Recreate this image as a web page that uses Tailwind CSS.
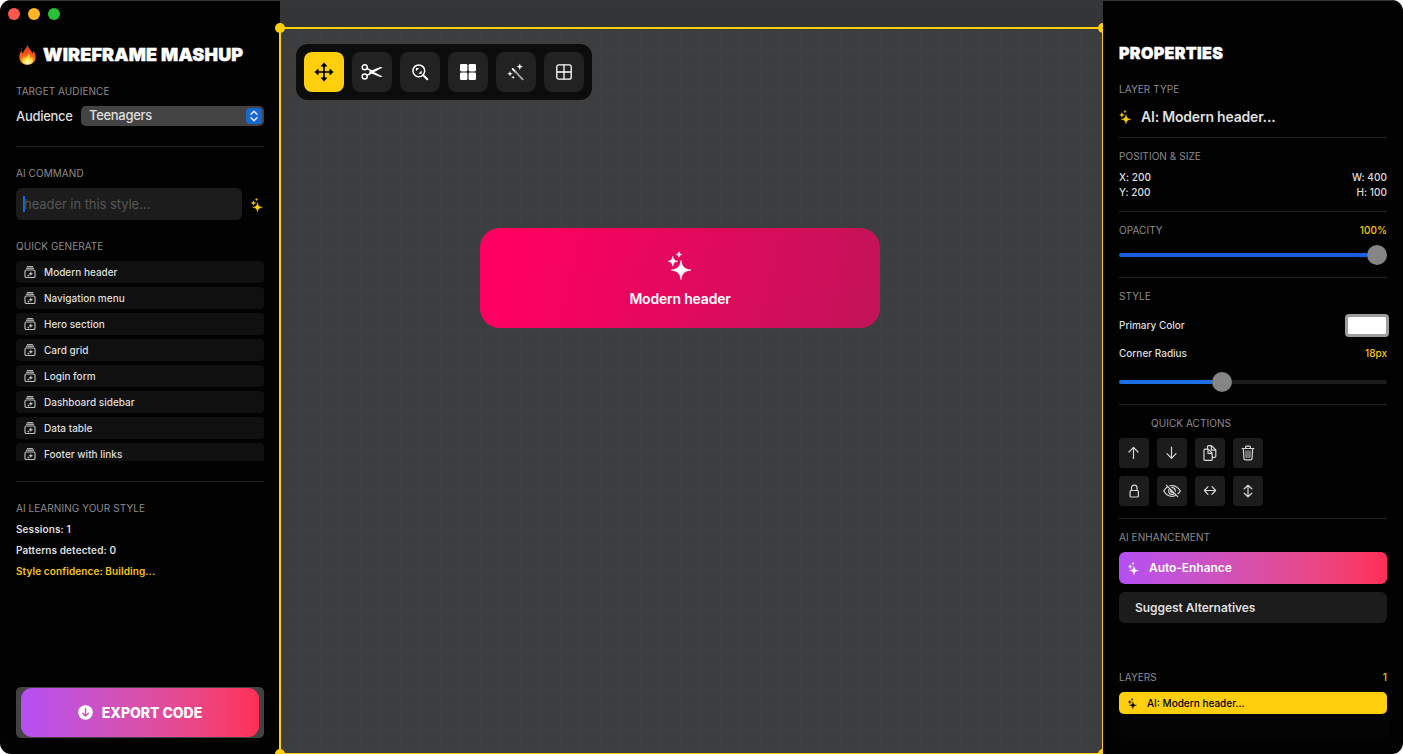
<!DOCTYPE html>
<html lang="en">
<head>
<meta charset="utf-8">
<title>Wireframe Mashup</title>
<script src="https://cdn.jsdelivr.net/npm/@tailwindcss/browser@4"></script>
</head>
<body class="bg-white font-['Inter',sans-serif]">
<svg class="hidden">
  <symbol id="sparkles" viewBox="0 0 24 28">
    <path fill="currentColor" stroke="currentColor" stroke-width=".7" stroke-linejoin="round" d="M13 9C13.900 15.200 16.200 17.700 23 18.600C16.200 19.500 13.900 22 13 28C12.100 22 9.800 19.500 3.200 18.600C9.800 17.700 12.100 15.200 13 9ZM4.800 5C5.400 8.200 6.400 9.200 9.600 9.800C6.400 10.400 5.400 11.400 4.800 14.600C4.200 11.400 3.200 10.400 .400 9.800C3.200 9.200 4.200 8.200 4.800 5ZM11 .300C11.400 2.100 11.900 2.600 13.700 3C11.900 3.400 11.400 3.900 11 5.700C10.600 3.900 10.100 3.400 8.300 3C10.100 2.600 10.600 2.100 11 .300Z"/>
  </symbol>
  <symbol id="stack" viewBox="0 0 12 12">
    <g fill="none" stroke="currentColor"><path stroke-width="1" d="M3 .6H9"/><path stroke-width="1.200" d="M2 2.200H10"/><rect x="1" y="4" width="10" height="7.500" rx="1.200" stroke-width="1.100"/></g>
    <path fill="currentColor" d="M6.800 5.300L7.500 7L9.200 7.700L7.500 8.400L6.800 10.100L6.100 8.400L4.400 7.700L6.100 7ZM4.300 8.200L4.700 9.200L5.700 9.600L4.700 10L4.300 11L3.900 10L2.900 9.600L3.900 9.200Z"/>
  </symbol>
</svg>
<div class="relative flex h-[754px] w-[1403px] overflow-hidden rounded-[11px] bg-[#020202] text-[#dfdfdf]">

  <aside class="flex w-[280px] shrink-0 flex-col px-4">
    <div class="-ml-2 mt-2 flex h-3 gap-2">
      <i class="size-3 rounded-full bg-[#ff5650]"></i><i class="size-3 rounded-full bg-[#ffb429]"></i><i class="size-3 rounded-full bg-[#27c138]"></i>
    </div>
    <h1 class="mt-[22px] flex h-6 items-center whitespace-nowrap text-white">
      <svg class="ml-[3px] mr-2 h-[21px] w-[17px]" viewBox="0 0 17 21">
        <defs><linearGradient id="fire" x1="0" y1="0" x2="0" y2="1"><stop offset="0" stop-color="#c83a18"/><stop offset=".45" stop-color="#f4501c"/><stop offset="1" stop-color="#ff9a1e"/></linearGradient>
        <radialGradient id="core" cx=".5" cy=".8" r=".6"><stop offset="0" stop-color="#fffbd0"/><stop offset=".55" stop-color="#ffe14a"/><stop offset="1" stop-color="#ffae25"/></radialGradient></defs>
        <path fill="url(#fire)" d="M8.500 0C8.300 4 4.600 5.600 4 9.500C2.700 8.700 2.600 7.300 3 6.200C.800 8.400 .200 10.800 .400 13.200C.700 17.900 4 20.800 8.400 20.800C13.200 20.800 16.400 17.800 16.600 13.600C16.800 10.600 15.600 8.600 14.400 6.800C14.300 8 13.900 8.800 13.200 9.200C13 5.800 8.700 4.600 8.500 0Z"/>
        <path fill="url(#core)" d="M9.300 9.200C9.600 11.200 6.800 12 6.500 14.300C5.800 13.900 5.400 13.200 5.300 12.600C3.800 13.900 2.900 15.200 3.100 16.600C3.400 19 5.400 20.600 8.500 20.600C11.600 20.600 13.900 19 14.100 16.500C14.200 14.900 13.500 13.600 12.700 12.600C12.500 13.500 12.100 14 11.500 14.300C11.700 12.200 11.100 10.400 9.300 9.200Z"/>
        <circle cx="2.600" cy="5" r=".7" fill="#8d2714"/>
      </svg>
      <span class="-ml-px text-[18px] font-black tracking-[0.160px] [-webkit-text-stroke:0.4px_white]">WIREFRAME MASHUP</span>
    </h1>
    <div class="mt-[19px] flex h-[13px] items-center text-[10px] tracking-[0.060px] text-[#8b8b8d]">TARGET AUDIENCE</div>
    <div class="mt-2 flex h-5 items-center text-[13px] font-medium">
      <span class="w-[65px] pt-[2px] tracking-[-0.300px]">Audience</span>
      <div class="flex h-5 grow items-center justify-between rounded-[5px] bg-[#434343] pl-2 pr-[2px]">
        <span class="tracking-[-0.300px]">Teenagers</span>
        <span class="flex size-4 items-center justify-center rounded-[4px] bg-[#1667d0]"><svg class="h-[12px] w-2" viewBox="0 0 8 12" fill="none" stroke="#e6eefb" stroke-width="1.500" stroke-linecap="round" stroke-linejoin="round"><path d="M1 4.200L4 1.200L7 4.200M1 7.800L4 10.800L7 7.800"/></svg></span>
      </div>
    </div>
    <div class="mt-5 h-px shrink-0 bg-[#222]"></div>
    <div class="mt-5 flex h-[13px] items-center text-[10px] tracking-[0.060px] text-[#8b8b8d]">AI COMMAND</div>
    <div class="mt-2 flex h-8 items-center gap-[9px]">
      <div class="flex h-8 w-[226px] items-center rounded-md bg-[#1c1c1c] pl-[7px] text-[13px] text-[#565656]"><i class="h-4 w-[2px] bg-[#0a68f0]"></i><span class="-ml-px pt-px tracking-[-0.060px]">header in this style...</span></div>
      <svg class="mt-[2px] h-[14px] w-3 text-[#ffcf0d]"><use href="#sparkles"/></svg>
    </div>
    <div class="mt-5 flex h-[13px] items-center text-[10px] tracking-[0.060px] text-[#8b8b8d]">QUICK GENERATE</div>
    <div id="generate" class="mt-2 flex h-[200px] flex-col gap-1 overflow-hidden"></div>
    <div class="mt-5 h-px shrink-0 bg-[#222]"></div>
    <div class="mt-5 flex h-[13px] items-center text-[10px] tracking-[0.060px] text-[#8b8b8d]">AI LEARNING YOUR STYLE</div>
    <div class="mt-2 flex flex-col gap-2 text-[10px] leading-[13px] font-semibold tracking-[0.100px]">
      <span>Sessions: 1</span><span>Patterns detected: 0</span><span class="text-[#f5c60f]">Style confidence: Building...</span>
    </div>
    <button class="mt-auto mb-4 h-[51px] rounded-[5px] bg-[#434343] px-[5px] py-px">
      <span class="flex h-[49px] items-center justify-center gap-[9px] rounded-[11px] bg-linear-to-r from-[#b44ff3] to-[#ff2e55] text-[14px] font-extrabold tracking-[-0.050px] text-white">
        <svg class="size-[15px]" viewBox="0 0 15 15"><circle cx="7.500" cy="7.500" r="7.300" fill="#fff"/><path d="M7.500 3.800V10.800M4.700 8.200L7.500 11L10.300 8.200" fill="none" stroke="#cc4fc0" stroke-width="1.400" stroke-linecap="round" stroke-linejoin="round"/></svg>
        <span>EXPORT CODE</span>
      </span>
    </button>
  </aside>

  <main class="relative w-[823px] shrink-0 overflow-hidden bg-[#343537]">
    <div class="mt-7 h-[726px] bg-[#3c3d3f] bg-[linear-gradient(to_right,#3f4042_1px,transparent_1px),linear-gradient(to_bottom,#3f4042_1px,transparent_1px)] bg-[size:20px_20px] px-4 pt-4">
      <div class="flex h-14 w-[296px] gap-2 rounded-xl bg-[#0c0c0c] p-2 text-white">
        <div class="grid size-10 place-items-center rounded-lg bg-[#ffcf0d] text-black"><svg class="size-5" viewBox="0 0 20 20"><path d="M10 3V17M3 10H17" stroke="currentColor" stroke-width="1.700"/><path fill="currentColor" stroke="currentColor" stroke-width=".6" stroke-linejoin="round" d="M10 .7L12.900 4.200H7.100ZM10 19.300L12.900 15.800H7.100ZM.7 10L4.200 7.100V12.900ZM19.300 10L15.800 7.100V12.900Z"/></svg></div>
        <div class="grid size-10 place-items-center rounded-lg bg-[#222]"><svg class="h-[18px] w-[22px]" viewBox="0 0 22 18"><g fill="none" stroke="currentColor" stroke-width="1.500"><circle cx="3.700" cy="4.200" r="2.500"/><circle cx="3.700" cy="13.600" r="2.500"/><path d="M6 5.400L12 9M6 12.400L12 9"/></g><path fill="currentColor" d="M8.500 8.300L18.500 4.200Q20.600 3.700 21.600 4.400L11.500 10L8.200 11.400ZM10 7.400L21.600 13.500Q20.600 14.300 18.500 13.800L9.500 10.100Z"/></svg></div>
        <div class="grid size-10 place-items-center rounded-lg bg-[#222]"><svg class="size-[18px]" viewBox="0 0 18 18" fill="none" stroke="currentColor"><circle cx="7.800" cy="7.800" r="5.900" stroke-width="1.500"/><path d="M12.300 12.300L16.300 16.300" stroke-width="2" stroke-linecap="round"/><path fill="currentColor" stroke="none" d="M4.900 4.900H8.200L4.900 8.200ZM10.700 10.700V7.400L7.400 10.700Z"/></svg></div>
        <div class="grid size-10 place-items-center rounded-lg bg-[#222]"><svg class="size-4" viewBox="0 0 16 16" fill="currentColor"><rect width="7.400" height="7.400" rx="1.300"/><rect x="8.600" width="7.400" height="7.400" rx="1.300"/><rect y="8.600" width="7.400" height="7.400" rx="1.300"/><rect x="8.600" y="8.600" width="7.400" height="7.400" rx="1.300"/></svg></div>
        <div class="grid size-10 place-items-center rounded-lg bg-[#222]"><svg class="size-[18px]" viewBox="0 0 18 18" fill="currentColor"><path d="M5.700 6L8.800 9.100" stroke="#fff" stroke-width="1.800" stroke-linecap="round"/><path d="M8.300 8.600L15.700 16.400" stroke="#aaa" stroke-width="1.800" stroke-linecap="round"/><path d="M12.800 .5L13.700 2.800L16 3.700L13.700 4.600L12.800 6.900L11.900 4.600L9.600 3.700L11.900 2.800ZM3 8L3.700 10.100L5.800 10.800L3.700 11.500L3 13.600L2.300 11.500L.200 10.800L2.300 10.100ZM6.100 12.500L6.600 13.800L7.900 14.300L6.600 14.800L6.100 16.100L5.600 14.800L4.300 14.300L5.600 13.800Z"/></svg></div>
        <div class="grid size-10 place-items-center rounded-lg bg-[#222]"><svg class="size-4" viewBox="0 0 16 16" fill="none" stroke="currentColor" stroke-width="1.300"><rect x=".8" y=".8" width="14.400" height="14.400" rx="2"/><path d="M8 1V15M1 8H15"/></svg></div>
      </div>
      <div class="ml-[184px] mt-32 flex h-[100px] w-[400px] flex-col items-center rounded-[20px] bg-[linear-gradient(104deg,#ff0062_8%,#c31359_98%)] pt-[23px] text-white">
        <svg class="h-[29px] w-6"><use href="#sparkles"/></svg>
        <span class="mt-[9px] text-[14px] leading-5 font-semibold tracking-[-0.200px]">Modern header</span>
      </div>
    </div>
    <div class="absolute -left-px top-[27px] h-[728px] w-[825px] border-2 border-[#ffcf0d]"></div>
  </main>
  <i class="absolute left-[275px] top-[23px] size-[10px] rounded-full bg-[#ffcf0d]"></i>
  <i class="absolute left-[275px] top-[749px] size-[10px] rounded-full bg-[#ffcf0d]"></i>
  <div class="absolute left-[279px] top-7 h-[726px] w-px bg-[#ffcf0d]"></div>
  <i class="absolute left-[1098px] top-[23px] h-[10px] w-[5px] rounded-l-full bg-[#ffcf0d]"></i>
  <i class="absolute left-[1098px] top-[749px] h-[10px] w-[5px] rounded-l-full bg-[#ffcf0d]"></i>

  <aside class="flex w-[300px] shrink-0 flex-col px-4">
    <h2 class="mt-[41px] flex h-6 shrink-0 items-center text-[16px] font-black tracking-[0.350px] text-white [-webkit-text-stroke:0.4px_white]">PROPERTIES</h2>
    <div class="mt-[18px] flex h-[13px] items-center text-[10px] tracking-[0.060px] text-[#8b8b8d]">LAYER TYPE</div>
    <div class="mt-[11px] flex h-5 items-center gap-[9px] text-[14px] font-semibold tracking-[-0.200px]"><svg class="h-[14px] w-[13px] text-[#ffcf0d]"><use href="#sparkles"/></svg><span class="-mt-[2px]">AI: Modern header...</span></div>
    <div class="mt-[10px] h-px shrink-0 bg-[#222]"></div>
    <div class="mt-3 flex h-[13px] items-center text-[10px] tracking-[0.060px] text-[#8b8b8d]">POSITION &amp; SIZE</div>
    <div class="mt-[7px] flex justify-between text-[10px] leading-[15px] font-medium tracking-[0.050px]"><div>X: 200<br>Y: 200</div><div class="text-right">W: 400<br>H: 100</div></div>
    <div class="mt-[11px] h-px shrink-0 bg-[#222]"></div>
    <div class="mt-3 flex h-[13px] items-center justify-between text-[10px] tracking-[0.060px] text-[#8b8b8d]"><span>OPACITY</span><span class="font-medium text-[#f5c60f]">100%</span></div>
    <div class="mt-2 flex h-5 items-center"><i class="h-1 grow rounded-l-full bg-[#1b5fe0]"></i><i class="size-5 rounded-full bg-[#858585]"></i></div>
    <div class="mt-3 h-px shrink-0 bg-[#222]"></div>
    <div class="mt-3 flex h-[13px] items-center text-[10px] tracking-[0.060px] text-[#8b8b8d]">STYLE</div>
    <div class="-mr-[2px] mt-[10px] flex h-6 items-center justify-between text-[10px] font-medium"><span>Primary Color</span><i class="h-[23px] w-11 rounded-[4px] border-[3px] border-[#9d9d9d] bg-white"></i></div>
    <div class="mt-[10px] flex h-[13px] items-center justify-between text-[10px] font-medium"><span>Corner Radius</span><span class="text-[#f5c60f]">18px</span></div>
    <div class="mt-3 flex h-5 items-center"><i class="h-1 w-[93px] rounded-l-full bg-[#1d70e4]"></i><i class="size-5 rounded-full bg-[#858585]"></i><i class="h-1 grow rounded-r-full bg-[#1c1c1c]"></i></div>
    <div class="mt-3 h-px shrink-0 bg-[#222]"></div>
    <div class="ml-8 mt-3 flex h-[13px] items-center text-[10px] tracking-[0.060px] text-[#8b8b8d]">QUICK ACTIONS</div>
    <div class="mt-2 grid w-[144px] grid-cols-4 gap-2 text-[#d6d6d6]">
      <div class="grid size-[30px] place-items-center rounded-[4px] bg-[#1c1c1c]"><svg class="size-4" viewBox="0 0 16 16" fill="none" stroke="currentColor" stroke-width="1.200" stroke-linecap="round" stroke-linejoin="round"><path d="M7.500 13.500V2.500M3 7L7.500 2.300L12 7"/></svg></div>
      <div class="grid size-[30px] place-items-center rounded-[4px] bg-[#1c1c1c]"><svg class="size-4" viewBox="0 0 16 16" fill="none" stroke="currentColor" stroke-width="1.200" stroke-linecap="round" stroke-linejoin="round"><path d="M7.500 2V13M3 8.700L7.500 13.400L12 8.700"/></svg></div>
      <div class="grid size-[30px] place-items-center rounded-[4px] bg-[#1c1c1c]"><svg class="size-4" viewBox="0 0 16 16" fill="none" stroke="currentColor" stroke-width="1.200" stroke-linejoin="round"><path d="M3 4.200H6.200L10.200 8.200V14.400Q10.200 15.400 9.200 15.400H3Q2 15.400 2 14.400V5.200Q2 4.200 3 4.200ZM6 4.500V8.400H10M5.500 3.800V1.700Q5.500 .700 6.500 .700H9.500L13.800 5V11.200Q13.800 12.400 12.800 12.400H10.500M9.300 .900V5.200H13.500"/></svg></div>
      <div class="grid size-[30px] place-items-center rounded-[4px] bg-[#1c1c1c]"><svg class="size-4" viewBox="0 0 16 16" fill="none" stroke="currentColor" stroke-width="1.200" stroke-linecap="round" stroke-linejoin="round"><path d="M2.200 3.500H13.800M5.700 3.200V2Q5.700 1.200 6.500 1.200H9.500Q10.300 1.200 10.300 2V3.200M3.300 3.800L4 13.600Q4.100 14.800 5.200 14.800H10.800Q11.900 14.800 12 13.600L12.700 3.800"/><path stroke-width=".9" d="M5.900 5.800L6.200 12.500M8 5.800V12.500M10.100 5.800L9.800 12.500"/></svg></div>
      <div class="grid size-[30px] place-items-center rounded-[4px] bg-[#1c1c1c]"><svg class="size-4" viewBox="0 0 16 16" fill="none" stroke="currentColor" stroke-width="1.200"><rect x="4.100" y="7.500" width="8.300" height="6.500" rx="1"/><path d="M5.500 7.300V5Q5.500 2.200 8.250 2.200Q11 2.200 11 5V7.300"/></svg></div>
      <div class="grid size-[30px] place-items-center rounded-[4px] bg-[#1c1c1c]"><svg class="h-4 w-[18px]" viewBox="0 0 18 16" fill="none" stroke="currentColor" stroke-width="1.200"><path d="M.7 8Q4 2.700 9 2.700T17.300 8Q14 13.300 9 13.300T.7 8Z"/><circle cx="9" cy="8" r="3.300"/><circle cx="9" cy="8" r="1.300" fill="currentColor"/><path stroke="#1c1c1c" stroke-width="1.500" d="M4.500 1.800L15.300 12.800"/><path stroke-linecap="round" d="M3.500 2.300L14.700 13.600"/></svg></div>
      <div class="grid size-[30px] place-items-center rounded-[4px] bg-[#1c1c1c]"><svg class="size-4" viewBox="0 0 16 16" fill="none" stroke="currentColor" stroke-width="1.200" stroke-linecap="round" stroke-linejoin="round"><path d="M2.700 7.500H13.300M6 3.700L2.400 7.500L6 11.300M10 3.700L13.600 7.500L10 11.300"/></svg></div>
      <div class="grid size-[30px] place-items-center rounded-[4px] bg-[#1c1c1c]"><svg class="size-4" viewBox="0 0 16 16" fill="none" stroke="currentColor" stroke-width="1.200" stroke-linecap="round" stroke-linejoin="round"><path d="M8 2.500V13.500M4.200 5.800L8 2.200L11.800 5.800M4.200 10.200L8 13.800L11.800 10.200"/></svg></div>
    </div>
    <div class="mt-3 h-px shrink-0 bg-[#222]"></div>
    <div class="mt-3 flex h-[13px] items-center text-[10px] tracking-[0.060px] text-[#8b8b8d]">AI ENHANCEMENT</div>
    <div class="mt-2 flex h-8 items-center gap-[10px] rounded-md bg-linear-to-r from-[#b44ff3] to-[#ff2e55] pl-[9px] text-[12px] font-semibold tracking-[-0.050px] text-white"><svg class="h-[13px] w-[11px]"><use href="#sparkles"/></svg><span>Auto-Enhance</span></div>
    <div class="mt-2 flex h-[31px] items-center rounded-md bg-[#1c1c1c] pl-4 text-[12px] font-semibold tracking-[-0.050px]">Suggest Alternatives</div>
    <div class="mt-12 flex h-[13px] items-center justify-between text-[10px] tracking-[0.060px] text-[#8b8b8d]"><span>LAYERS</span><span class="font-medium text-[#f5c60f]">1</span></div>
    <div class="mt-2 h-[46px] rounded-md bg-[#040404]"><div class="flex h-[22px] items-center gap-[10px] rounded-[5px] bg-[#ffcf0d] pl-[9px] text-[10px] font-medium text-black"><svg class="h-[11px] w-[9px]"><use href="#sparkles"/></svg><span>AI: Modern header...</span></div></div>
  </aside>
  <div class="absolute inset-x-[10px] top-0 h-px bg-[#363636]"></div>
</div>
<script>
document.getElementById('generate').innerHTML = ['Modern header','Navigation menu','Hero section','Card grid','Login form','Dashboard sidebar','Data table','Footer with links'].map(t =>
  `<div class="flex h-[22px] shrink-0 items-center gap-2 rounded-[4px] bg-[#101010] pl-2 text-[10px] font-medium"><svg class="size-3 text-[#c4c4c4]"><use href="#stack"/></svg><span>${t}</span></div>`).join('');
</script>
</body>
</html>
